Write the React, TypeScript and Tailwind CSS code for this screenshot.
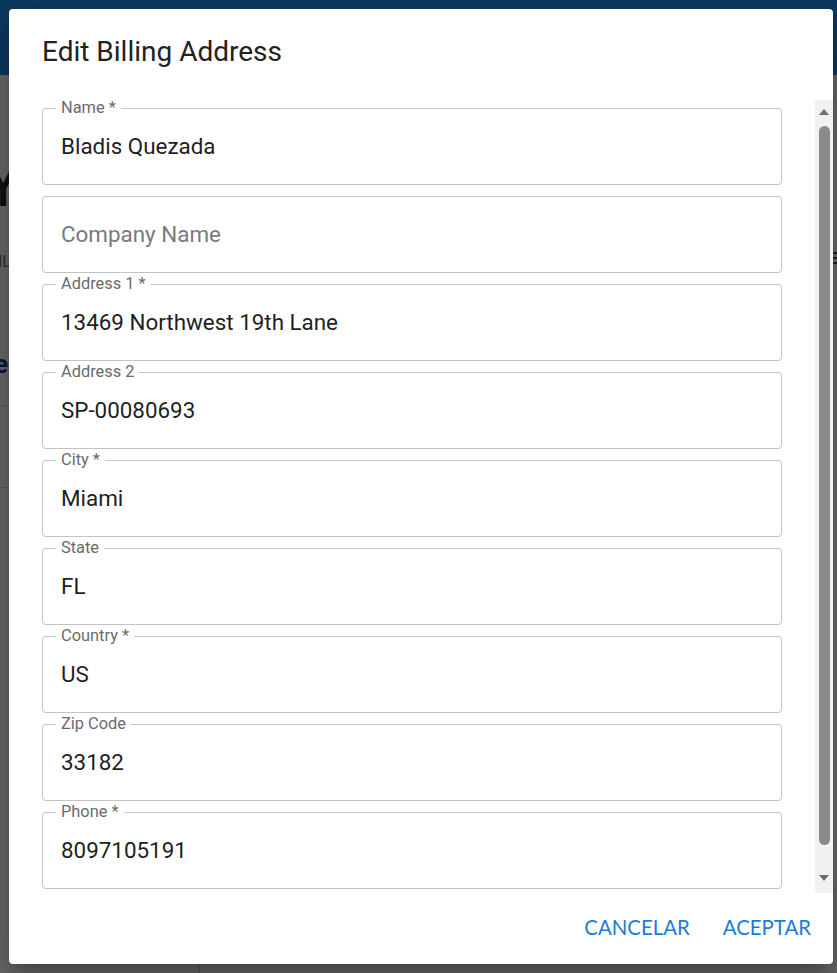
import React from "react";

interface Field {
  label: string;
  value: string;
  required?: boolean;
}

const fields: Field[] = [
  { label: "Name", value: "Bladis Quezada", required: true },
  { label: "Company Name", value: "" },
  { label: "Address 1", value: "13469 Northwest 19th Lane", required: true },
  { label: "Address 2", value: "SP-00080693" },
  { label: "City", value: "Miami", required: true },
  { label: "State", value: "FL" },
  { label: "Country", value: "US", required: true },
  { label: "Zip Code", value: "33182" },
  { label: "Phone", value: "8097105191", required: true },
];

function OutlinedField({ field }: { field: Field }) {
  const empty = field.value === "";
  return (
    <div className="relative h-[77px] shrink-0 rounded-[4px] border border-[#c4c4c4] flex items-center pl-[18px] pb-[2px]">
      {!empty && (
        <span className="absolute left-[13px] top-[-10px] bg-white px-[5px] text-[16.4px] leading-[18px] text-[#6b6b6b]">
          {field.label}
          {field.required ? " *" : ""}
        </span>
      )}
      <span
        className={
          empty
            ? "text-[22.4px] leading-[28px] text-[#7a7a7a]"
            : "text-[22.4px] leading-[28px] text-[#1f1f1f]"
        }
      >
        {empty ? field.label : field.value}
      </span>
    </div>
  );
}

export default function App() {
  return (
    <div
      className="relative h-[973px] w-full overflow-hidden bg-[#696969]"
      style={{ fontFamily: "Roboto, 'Noto Sans', sans-serif" }}
    >
      {/* dimmed page behind the dialog */}
      <div className="h-[75px] bg-[#0e3861]" />
      <div className="absolute left-[-16px] top-[153px] text-[64px] leading-none text-[#121212]">Y</div>
      <div className="absolute left-[-2px] top-[250px] text-[16px] text-[#2b2b2b]">IL</div>
      <div className="absolute left-[-6px] top-[345px] text-[26px] font-bold text-[#0b1a3a]">e</div>
      <div className="absolute left-0 top-[405px] h-px w-[10px] bg-[#585858]" />
      <div className="absolute left-0 top-[487px] h-px w-[10px] bg-[#585858]" />
      <div className="absolute left-[199px] top-[960px] h-[13px] w-px bg-[#555]" />
      <div className="absolute right-0 top-[252px] flex w-[4px] flex-col gap-[3px]">
        <div className="h-[2px] bg-[#222]" />
        <div className="h-[2px] bg-[#222]" />
        <div className="h-[2px] bg-[#222]" />
      </div>

      {/* dialog */}
      <div className="absolute left-[9px] top-[9px] flex h-[955px] w-[824px] flex-col rounded-[4px] bg-white shadow-[0_11px_15px_-7px_rgba(0,0,0,0.2),0_24px_38px_3px_rgba(0,0,0,0.14),0_9px_46px_8px_rgba(0,0,0,0.12)]">
        <div className="h-[91px] pl-[33px] pt-[27px]">
          <h2 className="text-[28px] leading-[32px] text-[#222]">Edit Billing Address</h2>
        </div>

        <div className="flex h-[793px]">
          <div className="flex w-[806px] flex-col gap-[11px] overflow-hidden pl-[33px] pr-[33px] pt-[8px]">
            {fields.map((f) => (
              <OutlinedField key={f.label} field={f} />
            ))}
          </div>
          {/* scrollbar */}
          <div className="flex w-[18px] flex-col items-center bg-[#f1f1f1]">
            <div className="flex h-[26px] items-start justify-center pt-[8px]">
              <svg width="12" height="8" viewBox="0 0 12 8">
                <polygon points="6,1 11,7 1,7" fill="#6e6e6e" />
              </svg>
            </div>
            <div className="h-[719px] w-[11px] rounded-[6px] bg-[#8a8a8a]" />
            <div className="flex h-[48px] items-start justify-center pt-[29px]">
              <svg width="12" height="8" viewBox="0 0 12 8">
                <polygon points="1,1 11,1 6,7" fill="#6e6e6e" />
              </svg>
            </div>
          </div>
        </div>

        <div
          className="flex flex-1 items-center justify-end gap-[33px] pb-[2px] pr-[22px]"
          style={{ fontFamily: "Lato, Roboto, sans-serif" }}
        >
          <button className="text-[20.4px] uppercase text-[#1e7bd9]">Cancelar</button>
          <button className="text-[20.4px] uppercase text-[#1e7bd9]">Aceptar</button>
        </div>
      </div>
    </div>
  );
}
